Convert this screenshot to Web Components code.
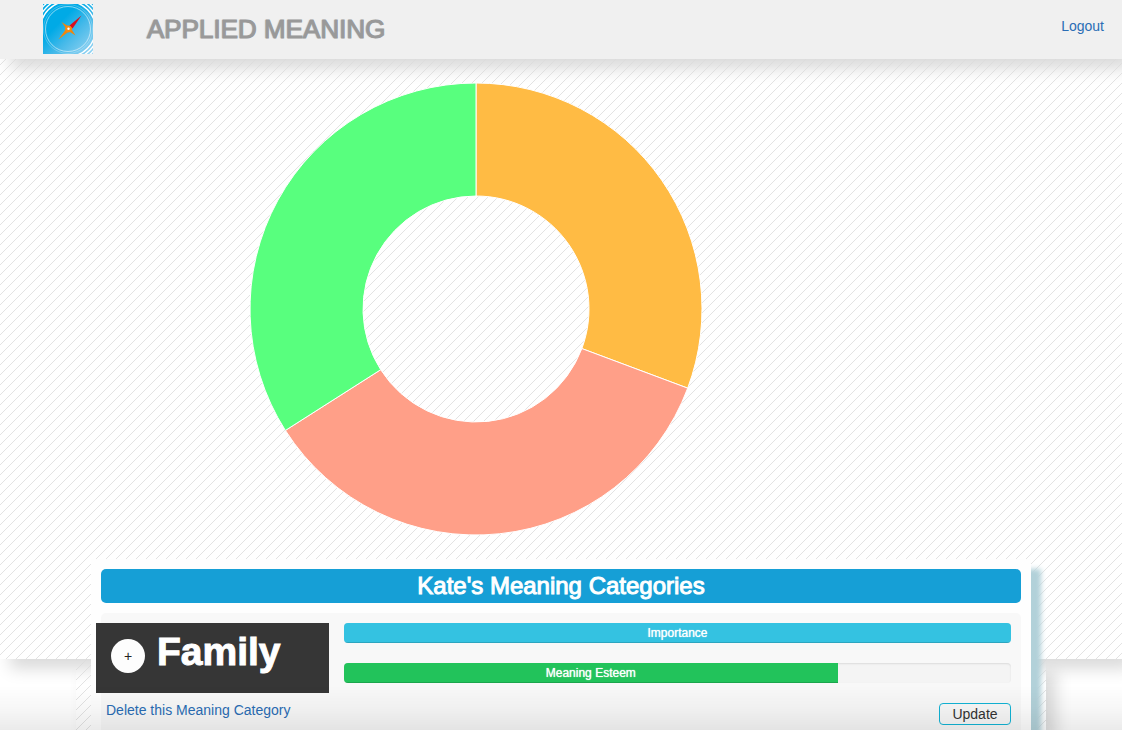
<!DOCTYPE html>
<html lang="en">
<head>
<meta charset="utf-8">
<meta name="viewport" content="width=device-width, initial-scale=1">
<title>Applied Meaning</title>
<style>
  :root {
    --hatch: url("data:image/svg+xml,%3Csvg xmlns='http://www.w3.org/2000/svg' width='10' height='10'%3E%3Cpath d='M-1 11L11 -1M-1 1L1 -1M9 11L11 9' stroke='%23dcdcdc' stroke-width='.8'/%3E%3C/svg%3E");
    --drop: 10px 10px 15px #dbdbdb;
    --link: #2a6db5;
  }
  html, body { margin: 0; }
  body { background: #fff; color: #333; font: 14px/20px "Liberation Sans", Arial, sans-serif; }
</style>
</head>
<body>
<am-app>
  <am-header heading="APPLIED MEANING"><a href="#logout" slot="nav">Logout</a></am-header>
  <am-hero><am-donut values="110.5,127,122.5" colors="#ffbb44,#ff9f88,#58ff7e"></am-donut></am-hero>
  <am-board heading="Kate's Meaning Categories">
    <am-category name="Family">
      <am-meter label="Importance" value="100"></am-meter>
      <am-meter label="Meaning Esteem" value="74" tone="green"></am-meter>
    </am-category>
  </am-board>
</am-app>

<script>
class AmElement extends HTMLElement {
  connectedCallback() {
    if (this.shadowRoot) return;
    this.attachShadow({ mode: "open" }).innerHTML =
      `<style>*{box-sizing:border-box}${this.styles()}</style>${this.markup()}`;
  }
}

customElements.define("am-app", class extends AmElement {
  styles() {
    return `
      :host { display: flex; flex-direction: column; min-height: 100vh; overflow: hidden; }
      .fade { position: fixed; inset: auto 0 0 0; height: 44px; z-index: 9; pointer-events: none;
        background: linear-gradient(rgba(0,0,0,0), rgba(0,0,0,.03) 50%, rgba(0,0,0,.08)); }`;
  }
  markup() { return `<slot></slot><div class="fade"></div>`; }
});

customElements.define("am-header", class extends AmElement {
  styles() {
    return `
      :host { display: block; position: relative; z-index: 3; background: #f0f0f0; box-shadow: var(--drop); }
      header { display: flex; align-items: center; height: 59px; padding: 0 18px 1px 43px; }
      svg { display: block; width: 50px; height: 50px; }
      h1 { flex: 1; margin: 0 0 0 54px; font-size: 26px; line-height: 32px; font-weight: 400; color: #999;
        -webkit-text-stroke: 1px #999; text-shadow: -1px 0 1px #bbb; }
      ::slotted(a) { color: var(--link); text-decoration: none; margin-bottom: 6px; }`;
  }
  markup() {
    return `
      <header>
        <svg viewBox="0 0 50 50" role="img" aria-label="Compass">
          <defs>
            <linearGradient id="sky" x1="0" y1="0" x2="1" y2="1">
              <stop offset=".35" stop-color="#00aae6"/><stop offset=".6" stop-color="#45b9e9"/><stop offset="1" stop-color="#9cd6f3"/>
            </linearGradient>
            <clipPath id="rim"><path d="M0 0H50V50H34L0 17Z"/></clipPath>
          </defs>
          <rect width="50" height="50" fill="url(#sky)"/>
          <g fill="none" stroke="#fff">
            <circle cx="25" cy="25" r="22.500" stroke-width=".9" stroke-opacity=".6"/>
            <circle cx="25" cy="25" r="24.500" stroke-width=".6" stroke-opacity=".4"/>
            <g clip-path="url(#rim)" stroke-width="1.400">
              <circle cx="25" cy="25" r="27.500"/>
              <circle cx="25" cy="25" r="30.500"/>
              <circle cx="25" cy="25" r="33.500"/>
            </g>
          </g>
          <path d="M18.500 18L24 21.500L27 22L32 18.500L29 23.500L29 26L32.500 31.500L27 28L24.500 28.500L15.500 35.500L22 26.500L22.500 23.500Z" fill="#f0860c"/>
          <path d="M38.500 11.500L29.500 24.500L26.500 21.500Z" fill="#d80f1c"/>
          <circle cx="25.500" cy="25" r="3.200" fill="#f58b10"/><circle cx="25.500" cy="24.700" r="1.200" fill="#fff"/>
        </svg>
        <h1>${this.getAttribute("heading")}</h1>
        <slot name="nav"></slot>
      </header>`;
  }
});

customElements.define("am-hero", class extends AmElement {
  styles() {
    return `
      :host { display: block; position: relative; z-index: 1; background: #fff var(--hatch) 6px 0; box-shadow: var(--drop); }
      .inner { max-width: 970px; height: 600px; margin: 0 auto; padding: 24px 0 0 174px; }`;
  }
  markup() { return `<div class="inner"><slot></slot></div>`; }
});

customElements.define("am-donut", class extends AmElement {
  styles() { return `:host { display: block; width: 452px; max-width: 100%; } svg { display: block; width: 100%; }`; }
  markup() {
    const values = this.getAttribute("values").split(",").map(Number);
    const colors = this.getAttribute("colors").split(",");
    const total = values.reduce((a, b) => a + b, 0);
    const point = (r, t) => `${226 + r * Math.sin(t)} ${226 - r * Math.cos(t)}`;
    let start = 0;
    const slices = values.map((value, i) => {
      const end = start + value / total * 2 * Math.PI;
      const large = end - start > Math.PI ? 1 : 0;
      const d = `M${point(226, start)}A226 226 0 ${large} 1 ${point(226, end)}L${point(113, end)}A113 113 0 ${large} 0 ${point(113, start)}Z`;
      start = end;
      return `<path d="${d}" fill="${colors[i]}" stroke="#fff" stroke-width="1"/>`;
    });
    return `<svg viewBox="0 0 452 452" role="img" aria-label="Meaning categories chart">${slices.join("")}</svg>`;
  }
});

customElements.define("am-board", class extends AmElement {
  styles() {
    return `
      :host { display: flex; flex: 1; width: calc(100% - 30px); max-width: 970px; margin: 0 auto;
        background: #fff var(--hatch) 1px 0; box-shadow: var(--drop); }
      section { position: relative; z-index: 2; flex: 1; display: flex; flex-direction: column; gap: 10px;
        margin: -100px 15px 0; padding: 10px 10px 0; background: #fefefe; box-shadow: 10px 10px 5px #b2d1d9; }
      h2 { margin: 0; border-radius: 5px; background: #169fd6; color: #fff; text-align: center;
        font-size: 24px; line-height: 34px; font-weight: 400; -webkit-text-stroke: 1px #fff; }`;
  }
  markup() { return `<section><h2>${this.getAttribute("heading")}</h2><slot></slot></section>`; }
});

customElements.define("am-category", class extends AmElement {
  styles() {
    return `
      :host { display: grid; flex: 1; grid-template-columns: 228px 1fr; gap: 10px 15px; align-content: start;
        padding: 10px 10px 5px 0; border-radius: 5px 5px 0 0; background: #f8f8f8; }
      .name { display: flex; gap: 12px; height: 70px; margin-left: -5px; padding: 0 15px; background: #363636; }
      .name button { width: 34px; height: 34px; margin-top: 16px; padding: 0; border: 0; border-radius: 50%;
        background: #fdfdfd; color: #222; font: 14px/34px "Liberation Sans", Arial, sans-serif; }
      h3 { margin: 0; color: #fff; font-size: 39px; line-height: 58px; font-weight: 700; -webkit-text-stroke: 1px #fff; }
      .meters { display: grid; gap: 20px; align-content: start; }
      a { color: var(--link); text-decoration: none; padding-left: 5px; line-height: 14px; }
      .update { justify-self: end; width: 72px; height: 22px; padding: 0; border: 1px solid #12b4d6; border-radius: 4px;
        background: #f8f8f8; color: #333; font: 14px/20px "Liberation Sans", Arial, sans-serif; }`;
  }
  markup() {
    return `
      <div class="name"><button type="button" aria-label="Expand">+</button><h3>${this.getAttribute("name")}</h3></div>
      <div class="meters"><slot></slot></div>
      <a href="#delete">Delete this Meaning Category</a>
      <button class="update" type="button">Update</button>`;
  }
});

customElements.define("am-meter", class extends AmElement {
  styles() {
    return `
      :host { display: block; height: 20px; border-radius: 4px; overflow: hidden; background: #f4f4f4;
        box-shadow: inset 0 1px 2px rgba(0,0,0,.1); --fill: #34c2e1; }
      :host([tone="green"]) { --fill: #22c35b; }
      div { width: ${this.getAttribute("value")}%; height: 20px; background: var(--fill); color: #fff; text-align: center;
        font-size: 12px; line-height: 20px; text-shadow: 0 0 1px #fff; box-shadow: inset 0 -1px 0 rgba(0,0,0,.15); }`;
  }
  markup() {
    const value = this.getAttribute("value"), label = this.getAttribute("label");
    return `<div role="progressbar" aria-label="${label}" aria-valuenow="${value}">${label}</div>`;
  }
});
</script>
</body>
</html>
